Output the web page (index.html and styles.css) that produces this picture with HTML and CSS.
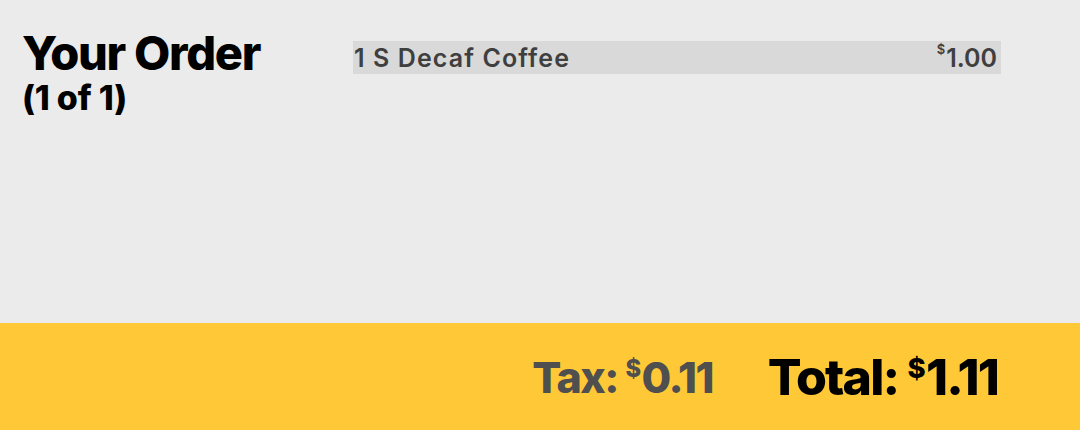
FILE: index.html
```html
<!DOCTYPE html>
<html>
<head>
<meta charset="utf-8">
<link rel="stylesheet" href="styles.css">
</head>
<body>
<div class="screen">
  <main class="main">
    <div class="heading">
      <h1 class="title">Your Order</h1>
      <div class="count">(1 of 1)</div>
    </div>
    <ul class="items">
      <li class="item">
        <span class="item-name">1 S Decaf Coffee</span>
        <span class="item-price"><sup class="cur">$</sup>1.00</span>
      </li>
    </ul>
  </main>
  <footer class="footer">
    <div class="tax">Tax: <sup class="cur">$</sup>0.11</div>
    <div class="total">Total: <sup class="cur">$</sup>1.11</div>
  </footer>
</div>
</body>
</html>
```
FILE: styles.css
```css
* { box-sizing: border-box; }
html, body { margin: 0; padding: 0; }
body {
  width: 1080px;
  height: 430px;
  overflow: hidden;
  font-family: Inter, "Liberation Sans", sans-serif;
  background: #ebebeb;
}
.screen {
  display: flex;
  flex-direction: column;
  height: 430px;
}
.main {
  flex: 1;
  display: flex;
  padding: 28px 79px 0 22px;
}
.heading {
  width: 331px;
  flex: none;
}
.title {
  margin: 0;
  font-size: 47px;
  font-weight: 800;
  line-height: 50px;
  letter-spacing: -1.3px;
  color: #000;
}
.count {
  font-size: 34px;
  font-weight: 800;
  line-height: 40px;
  letter-spacing: -0.2px;
  color: #000;
}
.items {
  list-style: none;
  margin: 13px 0 0 0;
  padding: 0;
  flex: 1;
}
.item {
  display: flex;
  justify-content: space-between;
  align-items: center;
  height: 33px;
  background: #d9d9d9;
  padding: 0 4px 0 1px;
  font-size: 25px;
  font-weight: 600;
  color: #3f3f3f;
}
.item-name { letter-spacing: 1.1px; }
.item-price { display: flex; align-items: flex-start; }
.item .cur {
  font-size: 13px;
  line-height: 1;
  vertical-align: top;
  margin-right: 1px;
}
.footer {
  height: 107px;
  flex: none;
  background: #ffc837;
  display: flex;
  justify-content: flex-end;
  align-items: center;
  gap: 55px;
  padding: 0 82px 0 0;
  font-weight: 800;
}
.tax {
  font-size: 43px;
  color: #4f4f4f;
  letter-spacing: -1.6px;
}
.total {
  font-size: 50px;
  color: #000;
  letter-spacing: -1.8px;
}
.footer .cur {
  font-size: 0.55em;
  vertical-align: top;
  position: relative;
  top: 0.15em;
  margin-right: 2px;
}
```
